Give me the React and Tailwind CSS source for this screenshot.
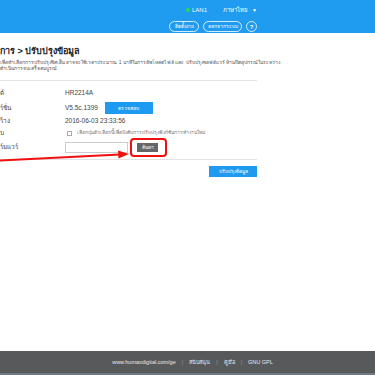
import React from "react";

const rows = [
  { label: "ต์", value: "HR2214A", h: "h-[14px]" },
  { label: "ร์ชั่น", value: "V5.5c.1399", h: "h-[16px]", check: true },
  { label: "ร้าง", value: "2016-06-03 23:33:56", h: "h-[10px]" },
];

const App = () => {
  return (
    <div className="relative min-h-[375px] flex flex-col bg-white font-['Liberation_Sans','Noto_Sans',sans-serif] text-[#333] overflow-hidden">
      {/* header */}
      <header className="h-[33px] bg-[#1f9bf0] text-white">
        <div className="w-[257px] flex flex-col items-end">
          <div className="h-[14px] pt-[6px] flex items-center text-[6px] leading-none">
            <span className="w-[4px] h-[4px] rounded-full bg-[#22e043] mr-[2px]" />
            <span>LAN1</span>
            <span className="ml-[16px]">ภาษาไทย</span>
            <span className="ml-[4px] text-[5px]">▼</span>
          </div>
          <div className="mt-[7px] flex items-center gap-[4px]">
            <button className="w-[30px] h-[11px] rounded-full border border-white/80 text-[5px] leading-none">
              ติดตั้งง่าย
            </button>
            <button className="w-[39px] h-[11px] rounded-full border border-white/80 text-[5px] leading-none">
              ออกจากระบบ
            </button>
            <button className="w-[11px] h-[11px] rounded-full border border-white/80 text-[6px] font-bold leading-none">
              ?
            </button>
          </div>
        </div>
      </header>

      {/* main */}
      <main className="flex-1 w-[257px] pt-[11px]">
        <h1 className="text-[9px] font-bold leading-[14px] text-[#222] whitespace-nowrap">
          การ &gt; ปรับปรุงข้อมูล
        </h1>
        <p className="mt-[1px] text-[5px] leading-[6px] text-[#555] whitespace-nowrap">
          เพื่อทำเลือกการปรับปรุงซิสเต็ม อาจจะใช้เวลาประมาณ 1 นาทีในการอัพโหลดไฟล์ และ ปรับปรุงซอฟต์แวร์ ห้ามปิดอุปกรณ์ในระหว่าง
          <br />
          ดำเนินการจนเสร็จสมบูรณ์
        </p>
        <div className="mt-[9px] border-t border-[#e3e3e3]" />

        <div className="pt-[5px] pb-[5px] text-[6.5px] text-[#444]">
          {rows.map((r) => (
            <div key={r.label} className={`${r.h} flex items-center`}>
              <span className="w-[65px] shrink-0 whitespace-nowrap">{r.label}</span>
              <span>{r.value}</span>
              {r.check && (
                <button className="ml-[7px] w-[48px] h-[12px] bg-[#1e9af0] text-white text-[5px] leading-none">
                  ตรวจสอบ
                </button>
              )}
            </div>
          ))}
          <div className="h-[14px] flex items-center">
            <span className="w-[67px] shrink-0">ับ</span>
            <span className="w-[5px] h-[5px] border border-[#aaa] bg-white" />
            <span className="ml-[5px] text-[5px] text-[#777] whitespace-nowrap">
              เลือกปุ่มตัวเลือกนี้เพื่อบังคับการปรับปรุงฟังก์ชันการทำงานใหม่
            </span>
          </div>
          <div className="h-[14px] flex items-center">
            <span className="w-[65px] shrink-0">ร์มแวร์</span>
            <span className="w-[63px] h-[11px] border border-[#ccc] bg-white" />
            <span className="relative ml-[9px]">
              <button className="w-[21px] h-[9px] bg-[#666] text-white text-[5px] leading-none">
                ค้นหา
              </button>
              <span className="absolute -left-[7px] -right-[9px] -top-[4px] -bottom-[5px] border-[2.5px] border-[#f01010] rounded-[4px]" />
            </span>
          </div>
        </div>

        <div className="border-t border-[#e3e3e3]" />
        <div className="pt-[6px] flex justify-end">
          <button className="w-[48px] h-[11px] bg-[#1e9af0] text-white text-[5px] leading-none">
            ปรับปรุงข้อมูล
          </button>
        </div>
      </main>

      {/* footer */}
      <footer className="h-[22px] bg-[#58595b] flex items-center justify-center text-[5.5px] text-[#e8e8e8] gap-[6px]">
        <span className="ml-[10px]">www.humaxdigital.com/ge</span>
        <span className="text-[#999]">|</span>
        <span>สนับสนุน</span>
        <span className="text-[#999]">|</span>
        <span>คู่มือ</span>
        <span className="text-[#999]">|</span>
        <span>GNU GPL</span>
      </footer>
      <div className="h-[2px] bg-[#6e7b86]" />

      {/* red annotation arrow */}
      <svg className="absolute left-0 top-0 pointer-events-none" width="375" height="375">
        <line x1="0" y1="160.5" x2="120" y2="154.5" stroke="#f01010" strokeWidth="2.2" />
        <polygon points="118,150.5 129,154 118.5,158.5" fill="#f01010" />
      </svg>
    </div>
  );
};

export default App;
